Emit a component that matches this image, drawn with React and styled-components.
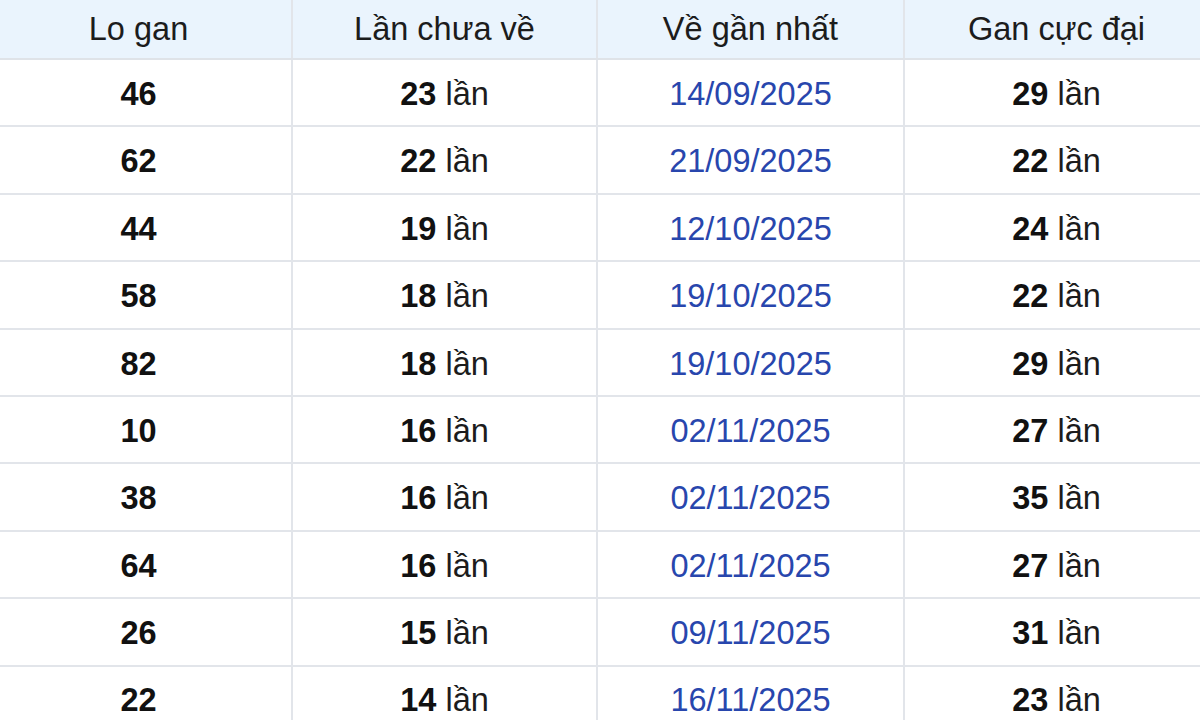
import React from "react";
import styled, { createGlobalStyle } from "styled-components";

const GlobalStyle = createGlobalStyle`
  html, body {
    margin: 0;
    padding: 0;
    background: #ffffff;
    overflow: hidden;
  }
`;

const Wrap = styled.div`
  width: 1200px;
  height: 720px;
  overflow: hidden;
  background: #fff;
`;

const Table = styled.table`
  width: 1222px;
  margin-left: -14px;
  border-collapse: collapse;
  table-layout: fixed;
  font-family: "Liberation Sans", Arial, sans-serif;
  font-size: 32.5px;
  color: #1c1c1c;
`;

const HeadCell = styled.th`
  height: 58px;
  padding: 0;
  background: #eaf4fd;
  font-weight: normal;
  text-align: center;
  vertical-align: middle;
  border-bottom: 2px solid #dfe3e8;
  border-right: 2px solid #e2e5ea;
  line-height: 1;
  &:last-child {
    border-right: none;
  }
`;

const Row = styled.tr`
  height: 67.4px;
`;

const Cell = styled.td`
  padding: 3px 0 0;
  text-align: center;
  vertical-align: middle;
  border-bottom: 2px solid #e2e5ea;
  border-right: 2px solid #e2e5ea;
  line-height: 1;
  color: ${(p) => (p.$date ? "#2846ad" : "#1c1c1c")};
  &:last-child {
    border-right: none;
  }
  b {
    font-weight: bold;
    color: #111;
  }
`;

const rows = [
  ["46", "23", "14/09/2025", "29"],
  ["62", "22", "21/09/2025", "22"],
  ["44", "19", "12/10/2025", "24"],
  ["58", "18", "19/10/2025", "22"],
  ["82", "18", "19/10/2025", "29"],
  ["10", "16", "02/11/2025", "27"],
  ["38", "16", "02/11/2025", "35"],
  ["64", "16", "02/11/2025", "27"],
  ["26", "15", "09/11/2025", "31"],
  ["22", "14", "16/11/2025", "23"],
];

export default function App() {
  return (
    <Wrap>
      <GlobalStyle />
      <Table>
        <colgroup>
          <col style={{ width: 306 }} />
          <col style={{ width: 305 }} />
          <col style={{ width: 307 }} />
          <col style={{ width: 304 }} />
        </colgroup>
        <thead>
          <tr>
            <HeadCell>Lo gan</HeadCell>
            <HeadCell>Lần chưa về</HeadCell>
            <HeadCell>Về gần nhất</HeadCell>
            <HeadCell>Gan cực đại</HeadCell>
          </tr>
        </thead>
        <tbody>
          {rows.map((r, i) => (
            <Row key={i}>
              <Cell>
                <b>{r[0]}</b>
              </Cell>
              <Cell>
                <b>{r[1]}</b> lần
              </Cell>
              <Cell $date>{r[2]}</Cell>
              <Cell>
                <b>{r[3]}</b> lần
              </Cell>
            </Row>
          ))}
        </tbody>
      </Table>
    </Wrap>
  );
}
